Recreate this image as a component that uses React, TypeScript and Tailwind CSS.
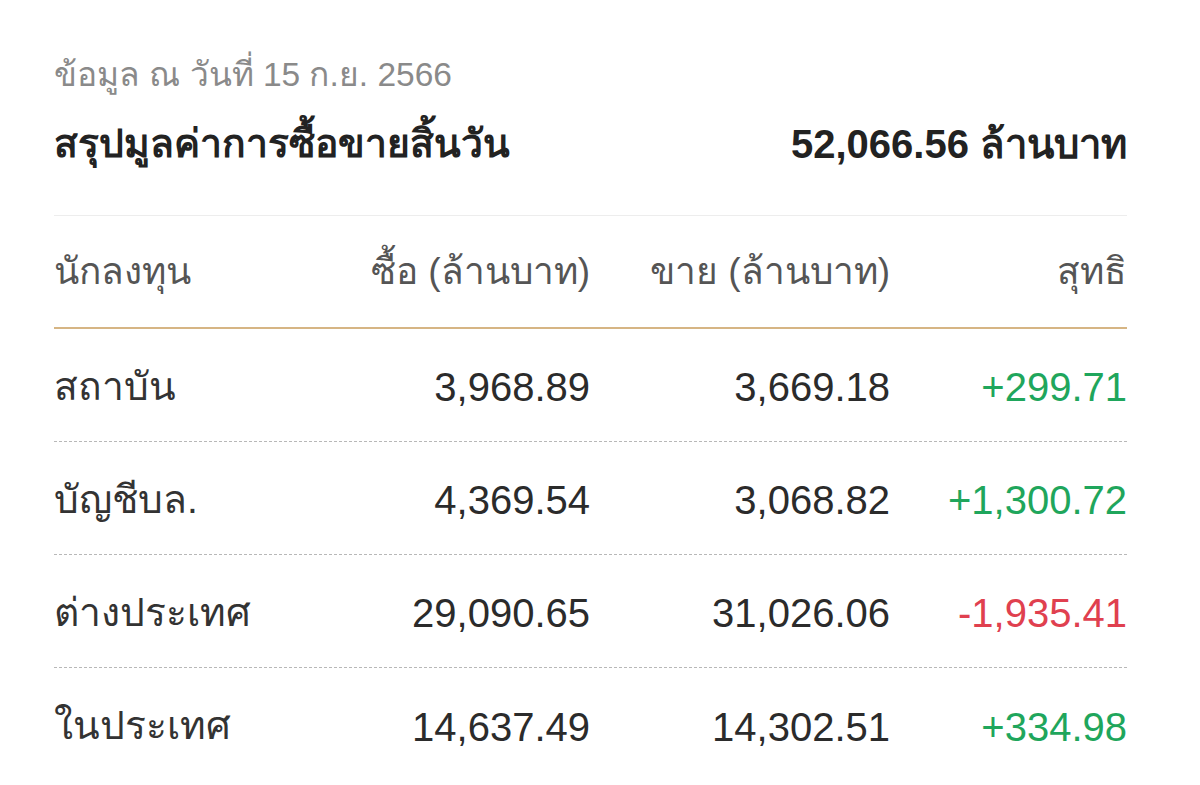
const rows = [
  { name: "สถาบัน", buy: "3,968.89", sell: "3,669.18", net: "+299.71", up: true },
  { name: "บัญชีบล.", buy: "4,369.54", sell: "3,068.82", net: "+1,300.72", up: true },
  { name: "ต่างประเทศ", buy: "29,090.65", sell: "31,026.06", net: "-1,935.41", up: false },
  { name: "ในประเทศ", buy: "14,637.49", sell: "14,302.51", net: "+334.98", up: true },
];

export default function App() {
  return (
    <div className="w-[1200px] h-[785px] bg-white pl-[54px] pr-[73px] pt-[54px] text-[#2b2b2b] font-['Liberation_Sans','Noto_Sans',sans-serif] overflow-hidden">
      <div className="text-[33.5px] leading-[42px] text-[#8a8a8a]">ข้อมูล ณ วันที่ 15 ก.ย. 2566</div>
      <div className="mt-[24px] flex items-center justify-between">
        <div className="text-[39px] leading-[48px] font-bold text-[#222]">สรุปมูลค่าการซื้อขายสิ้นวัน</div>
        <div className="text-[40px] leading-[48px] font-bold text-[#222]">52,066.56 ล้านบาท</div>
      </div>
      <div className="mt-[47px] border-t border-[#ededed]">
        <div className="grid grid-cols-[236px_300px_300px_237px] h-[113px] items-center text-[37px] text-[#555] border-b-2 border-[#d6b584]">
          <div>นักลงทุน</div>
          <div className="text-right">ซื้อ (ล้านบาท)</div>
          <div className="text-right">ขาย (ล้านบาท)</div>
          <div className="text-right">สุทธิ</div>
        </div>
        {rows.map((r, i) => (
          <div
            key={r.name}
            className={`grid grid-cols-[236px_300px_300px_237px] h-[113px] items-center pt-[4px] text-[40px] ${i < rows.length - 1 ? "border-b border-dashed border-[#b8b8b8]" : ""}`}
          >
            <div className="text-[39px] text-[#333]">{r.name}</div>
            <div className="text-right">{r.buy}</div>
            <div className="text-right">{r.sell}</div>
            <div className={`text-right ${r.up ? "text-[#1fa65c]" : "text-[#e0404f]"}`}>{r.net}</div>
          </div>
        ))}
      </div>
    </div>
  );
}
